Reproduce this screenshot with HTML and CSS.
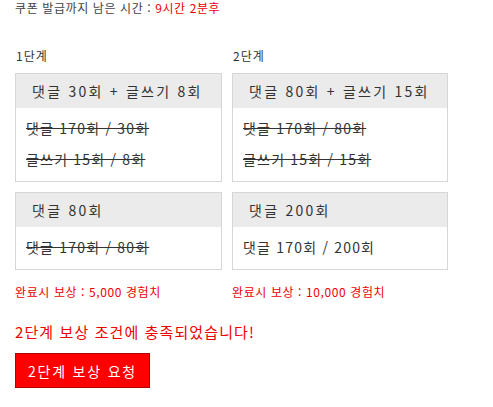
FILE: index.html
```html
<!DOCTYPE html>
<html lang="ko">
<head>
<meta charset="utf-8">
<link rel="stylesheet" href="styles.css">
</head>
<body>
<div class="page">
  <p class="timer">쿠폰 발급까지 남은 시간 : <span class="red">9시간 2분후</span></p>
  <div class="stages">
    <div class="stage stage1">
      <div class="label">1단계</div>
      <div class="box">
        <div class="head">댓글 30회 + 글쓰기 8회</div>
        <div class="body">
          <div class="line done">댓글 170회 / 30회</div>
          <div class="line done">글쓰기 15회 / 8회</div>
        </div>
      </div>
      <div class="box box2">
        <div class="head">댓글 80회</div>
        <div class="body">
          <div class="line done">댓글 170회 / 80회</div>
        </div>
      </div>
      <div class="reward">완료시 보상 : 5,000 경험치</div>
    </div>
    <div class="stage stage2">
      <div class="label">2단계</div>
      <div class="box">
        <div class="head">댓글 80회 + 글쓰기 15회</div>
        <div class="body">
          <div class="line done">댓글 170회 / 80회</div>
          <div class="line done">글쓰기 15회 / 15회</div>
        </div>
      </div>
      <div class="box box2">
        <div class="head">댓글 200회</div>
        <div class="body">
          <div class="line">댓글 170회 / 200회</div>
        </div>
      </div>
      <div class="reward">완료시 보상 : 10,000 경험치</div>
    </div>
  </div>
  <p class="notice">2단계 보상 조건에 충족되었습니다!</p>
  <button class="btn">2단계 보상 요청</button>
</div>
</body>
</html>
```
FILE: styles.css
```css
* { box-sizing: border-box; }
body {
  margin: 0;
  background: #fff;
  font-family: "Noto Sans CJK KR", "Noto Sans", sans-serif;
  color: #333;
}
.page { padding: 0 0 0 15px; }
.timer {
  margin: 0;
  font-size: 12px;
  line-height: 16px;
  letter-spacing: 0.6px;
  height: 16px;
  color: #444;
}
.red { color: #e00; }
.stages {
  display: flex;
  gap: 10px;
  margin-top: 32px;
}
.stage1 { width: 207px; }
.stage2 { width: 216px; }
.label {
  font-size: 12px;
  line-height: 16px;
  height: 16px;
  padding-left: 1px;
  margin-bottom: 9px;
  letter-spacing: 1px;
  color: #333;
}
.box {
  border: 1px solid #d6d6d6;
  background: #fff;
}
.box2 { margin-top: 10px; }
.head {
  background: #ebebeb;
  height: 34px;
  line-height: 34px;
  padding-left: 16px;
  font-size: 14px;
  letter-spacing: 2.25px;
  color: #333;
  white-space: nowrap;
}
.body {
  padding: 5px 10px 6px;
}
.line {
  font-size: 14px;
  line-height: 31px;
  height: 31px;
  letter-spacing: 1.2px;
  color: #333;
  white-space: nowrap;
}
.line.done { text-decoration: line-through; }
.reward {
  margin-top: 14px;
  font-size: 12px;
  line-height: 16px;
  letter-spacing: 0.6px;
  color: #e00;
}
.notice {
  margin: 23px 0 0;
  font-size: 15px;
  line-height: 18px;
  letter-spacing: 1.1px;
  color: #e00;
}
.btn {
  margin-top: 12px;
  width: 135px;
  height: 35px;
  background: #ff0000;
  border: 1px solid #b00000;
  color: #fff;
  font-family: inherit;
  font-size: 14px;
  letter-spacing: 1.8px;
  padding: 0;
}
```
